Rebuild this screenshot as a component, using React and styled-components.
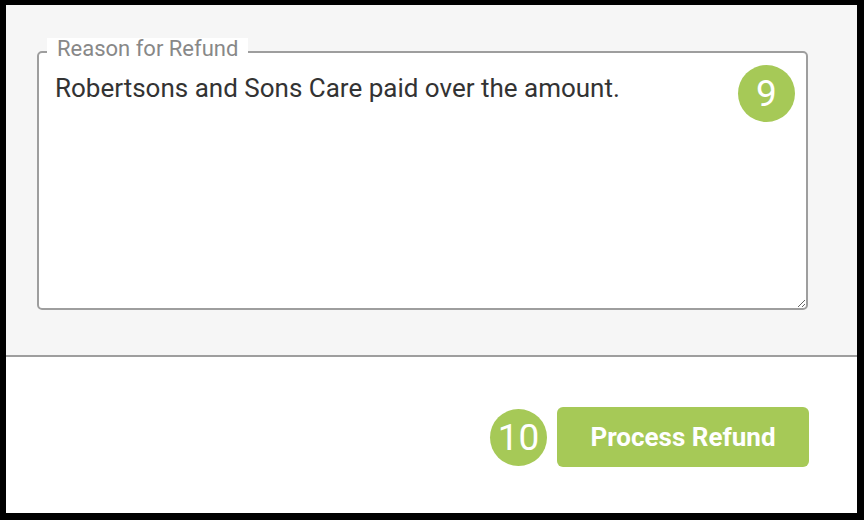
import styled, { createGlobalStyle } from "styled-components";

const GlobalStyle = createGlobalStyle`
  html, body {
    margin: 0;
    padding: 0;
    background: #000;
  }
  body {
    font-family: Roboto, "Liberation Sans", sans-serif;
  }
`;

const Frame = styled.div`
  width: 864px;
  height: 520px;
  box-sizing: border-box;
  padding: 5px 7px 7px 6px;
  background: #000;
`;

const Panel = styled.div`
  display: flex;
  flex-direction: column;
  height: 100%;
  background: #fff;
`;

const FormArea = styled.div`
  height: 352px;
  box-sizing: border-box;
  padding: 33px 49px 0 31px;
  background: #f6f6f6;
  border-bottom: 2px solid #9e9e9e;
`;

const Field = styled.fieldset`
  position: relative;
  margin: 0;
  padding: 0;
  border: 2px solid #9e9e9e;
  border-radius: 5px;
  background: #fff;
`;

const Label = styled.legend`
  margin-left: 8px;
  padding: 0 10px 6px;
  font-size: 22px;
  line-height: 22px;
  color: #888;
  background: #fff;
`;

const Reason = styled.textarea`
  display: block;
  width: 100%;
  height: 242px;
  box-sizing: border-box;
  margin: 0;
  padding: 6px 16px;
  border: none;
  outline: none;
  background: transparent;
  resize: both;
  font-family: Roboto, "Liberation Sans", sans-serif;
  font-size: 26px;
  line-height: 32px;
  color: #333;
`;

const Step = styled.span`
  display: flex;
  align-items: center;
  justify-content: center;
  width: 57px;
  height: 57px;
  border-radius: 50%;
  background: #a6c957;
  color: #fff;
  font-size: 37px;
  flex-shrink: 0;
`;

const FieldStep = styled(Step)`
  position: absolute;
  top: -1px;
  right: 11px;
`;

const Footer = styled.div`
  flex: 1;
  display: flex;
  align-items: center;
  justify-content: flex-end;
  gap: 10px;
  padding: 4px 48px 0 0;
`;

const Button = styled.button`
  width: 252px;
  height: 60px;
  border: none;
  border-radius: 6px;
  background: #a6c957;
  color: #fff;
  font-family: Roboto, "Liberation Sans", sans-serif;
  font-size: 26px;
  font-weight: 700;
  cursor: pointer;
`;

export default function App() {
  return (
    <Frame>
      <GlobalStyle />
      <Panel>
        <FormArea>
          <Field>
            <Label>Reason for Refund</Label>
            <Reason
              readOnly
              defaultValue="Robertsons and Sons Care paid over the amount."
            />
            <FieldStep>9</FieldStep>
          </Field>
        </FormArea>
        <Footer>
          <Step>10</Step>
          <Button>Process Refund</Button>
        </Footer>
      </Panel>
    </Frame>
  );
}
